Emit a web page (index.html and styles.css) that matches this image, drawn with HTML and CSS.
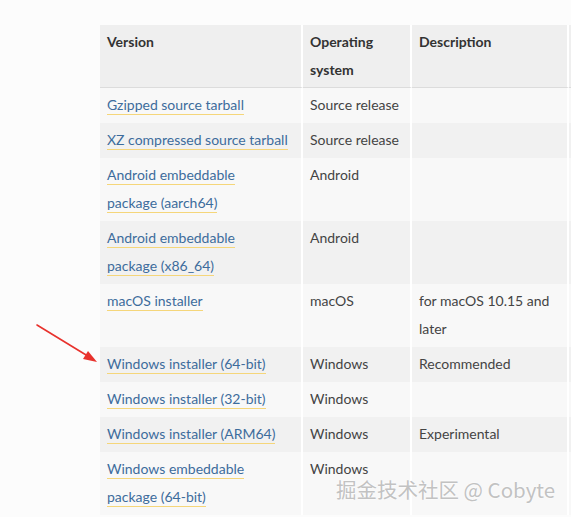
FILE: index.html
```html
<!DOCTYPE html>
<html>
<head>
<meta charset="utf-8">
<link rel="stylesheet" href="styles.css">
</head>
<body>
<div class="page">
  <table class="files">
    <thead>
      <tr>
        <th class="c1">Version</th>
        <th class="c2">Operating system</th>
        <th class="c3">Description</th>
        <th class="c4"></th>
      </tr>
    </thead>
    <tbody>
      <tr><td><a href="#">Gzipped source tarball</a></td><td>Source release</td><td></td><td></td></tr>
      <tr><td><a href="#">XZ compressed source tarball</a></td><td>Source release</td><td></td><td></td></tr>
      <tr><td><a href="#">Android embeddable<br>package (aarch64)</a></td><td>Android</td><td></td><td></td></tr>
      <tr><td><a href="#">Android embeddable<br>package (x86_64)</a></td><td>Android</td><td></td><td></td></tr>
      <tr><td><a href="#">macOS installer</a></td><td>macOS</td><td>for macOS 10.15 and later</td><td></td></tr>
      <tr><td><a href="#">Windows installer (64-bit)</a></td><td>Windows</td><td>Recommended</td><td></td></tr>
      <tr><td><a href="#">Windows installer (32-bit)</a></td><td>Windows</td><td></td><td></td></tr>
      <tr><td><a href="#">Windows installer (ARM64)</a></td><td>Windows</td><td>Experimental</td><td></td></tr>
      <tr><td><a href="#">Windows embeddable<br>package (64-bit)</a></td><td>Windows</td><td></td><td></td></tr>
    </tbody>
  </table>
  <svg class="arrow" width="70" height="45" viewBox="0 0 70 45">
    <line x1="2" y1="2" x2="56" y2="35" stroke="#e8322d" stroke-width="1.6" stroke-linecap="round"/>
    <polygon points="62,39 48,36 53,28" fill="#e8322d"/>
  </svg>
  <div class="watermark">掘金技术社区 @ Cobyte</div>
</div>
</body>
</html>
```
FILE: styles.css
```css
html, body {
  margin: 0;
  padding: 0;
  background: #fcfcfc;
  overflow: hidden;
}
.page {
  position: relative;
  width: 571px;
  height: 517px;
  overflow: hidden;
  padding: 25px 0 0 100px;
  box-sizing: border-box;
}
.files {
  border-collapse: separate;
  border-spacing: 0;
  table-layout: fixed;
  width: 585px;
  font-family: "Lato", "Liberation Sans", sans-serif;
  font-size: 14px;
  line-height: 28px;
  color: #444;
}
.files th, .files td {
  text-align: left;
  vertical-align: top;
  padding: 3px 7px 4px 7px;
  border-right: 2px solid #fff;
}
.files th {
  background: #efefef;
  font-weight: bold;
  color: #333;
  border-bottom: 1px solid #dcdcdc;
  padding-bottom: 3px;
}
.c1 { width: 187px; }
.c2 { width: 93px; }
.c3 { width: 141px; }
.c4 { width: 100px; }
.files tbody tr:nth-child(odd) td { background: #f8f8f8; }
.files tbody tr:nth-child(even) td { background: #f1f1f1; }
.files a {
  color: #3d6c9c;
  text-decoration: none;
  border-bottom: 1px solid #f5d67a;
  padding-bottom: 1px;
}
.arrow {
  position: absolute;
  left: 35px;
  top: 323px;
}
.watermark {
  position: absolute;
  left: 336px;
  top: 474px;
  font-family: "Noto Sans CJK SC", "Noto Sans", sans-serif;
  font-size: 20.5px;
  color: #c2c2c2;
  text-shadow: 0 0 2px #fff, 0 0 2px #fff;
  white-space: nowrap;
}
```
